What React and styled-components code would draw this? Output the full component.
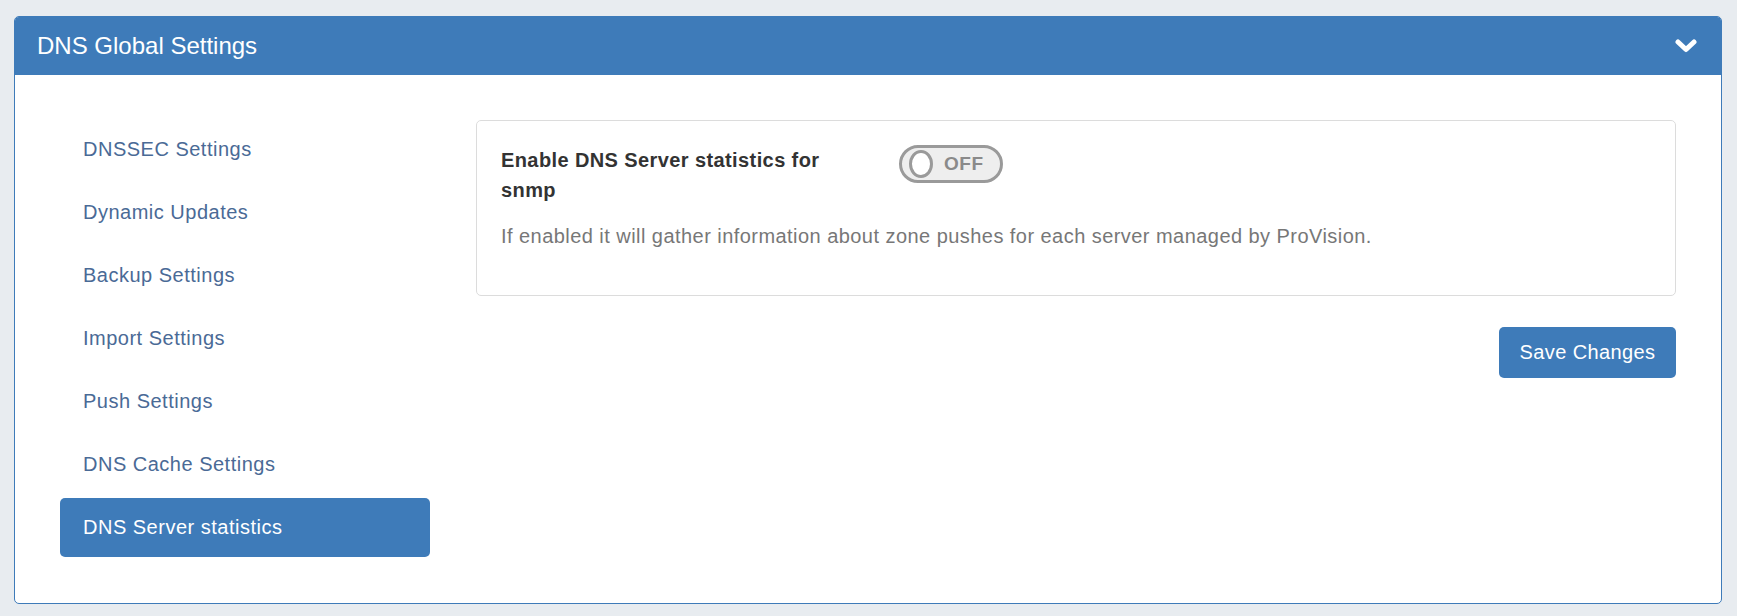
import React, { useState } from 'react'
import styled, { createGlobalStyle } from 'styled-components'

const GlobalStyle = createGlobalStyle`
  html, body {
    margin: 0;
    padding: 0;
    background: #e8ecf0;
    font-family: "Liberation Sans", Arial, sans-serif;
  }
  * { box-sizing: border-box; }
`

const sections = [
  'DNSSEC Settings',
  'Dynamic Updates',
  'Backup Settings',
  'Import Settings',
  'Push Settings',
  'DNS Cache Settings',
  'DNS Server statistics',
]

function App() {
  const [active, setActive] = useState(6)
  const [enabled, setEnabled] = useState(false)

  return (
    <>
      <GlobalStyle />
      <Page>
        <Panel>
          <PanelHeader>
            <h2>DNS Global Settings</h2>
            <svg width="22" height="14" viewBox="0 0 22 14">
              <polyline points="3,3 11,10.5 19,3" fill="none" stroke="#fff" strokeWidth="5" strokeLinecap="round" strokeLinejoin="round" />
            </svg>
          </PanelHeader>
          <PanelBody>
            <SideNav>
              {sections.map((s, i) => (
                <NavItem key={s} $active={i === active} onClick={() => setActive(i)}>{s}</NavItem>
              ))}
            </SideNav>
            <Content>
              <Card>
                <SettingRow>
                  <SettingLabel>Enable DNS Server statistics for snmp</SettingLabel>
                  <Toggle $on={enabled} onClick={() => setEnabled(!enabled)}>
                    <Knob />
                    <span>{enabled ? 'ON' : 'OFF'}</span>
                  </Toggle>
                </SettingRow>
                <Help>If enabled it will gather information about zone pushes for each server managed by ProVision.</Help>
              </Card>
              <Actions>
                <SaveButton>Save Changes</SaveButton>
              </Actions>
            </Content>
          </PanelBody>
        </Panel>
      </Page>
    </>
  )
}

export default App

const Page = styled.div`
  padding: 16px 15px 13px 14px;
`

const Panel = styled.section`
  border: 1px solid #3e7bb9;
  border-radius: 5px;
  background: #fff;
  overflow: hidden;
`

const PanelHeader = styled.header`
  height: 58px;
  background: #3e7bb9;
  display: flex;
  align-items: center;
  justify-content: space-between;
  padding: 0 24px 0 22px;

  h2 {
    margin: 0;
    color: #fff;
    font-size: 24px;
    font-weight: 400;
  }
`

const PanelBody = styled.div`
  display: grid;
  grid-template-columns: 370px 1fr;
  gap: 46px;
  padding: 45px 45px 46px 45px;
`

const SideNav = styled.nav`
  display: flex;
  flex-direction: column;
  gap: 4px;
`

const NavItem = styled.a`
  display: block;
  height: 59px;
  line-height: 59px;
  padding: 0 23px;
  border-radius: 5px;
  font-size: 20px;
  letter-spacing: 0.5px;
  cursor: pointer;
  color: ${p => (p.$active ? '#fff' : '#4a6a96')};
  background: ${p => (p.$active ? '#3e7bb9' : 'transparent')};
`

const Content = styled.div`
  display: flex;
  flex-direction: column;
`

const Card = styled.div`
  border: 1px solid #dcdcdc;
  border-radius: 5px;
  padding: 24px 24px 42px 24px;
  height: 176px;
`

const SettingRow = styled.div`
  display: grid;
  grid-template-columns: 398px auto;
  align-items: start;
`

const SettingLabel = styled.div`
  width: 340px;
  font-size: 20px;
  font-weight: 700;
  line-height: 30px;
  letter-spacing: 0.4px;
  color: #333;
`

const Toggle = styled.button`
  position: relative;
  width: 104px;
  height: 38px;
  border: 3px solid #9a9a9a;
  border-radius: 19px;
  background: #eee;
  padding: 0 0 0 42px;
  display: flex;
  align-items: center;
  cursor: pointer;
  font-family: inherit;

  span {
    font-size: 19px;
    font-weight: 700;
    color: #8a8a8a;
    letter-spacing: 0.5px;
  }
`

const Knob = styled.i`
  position: absolute;
  left: 7px;
  top: 2px;
  width: 24px;
  height: 28px;
  border: 3px solid #9a9a9a;
  border-radius: 50%;
  background: #fff;
`

const Help = styled.p`
  margin: 16px 0 0;
  font-size: 20px;
  line-height: 30px;
  letter-spacing: 0.45px;
  color: #777;
`

const Actions = styled.div`
  display: flex;
  justify-content: flex-end;
  margin-top: 31px;
`

const SaveButton = styled.button`
  width: 177px;
  height: 51px;
  border: none;
  border-radius: 5px;
  background: #3e7bb9;
  color: #fff;
  font-family: inherit;
  font-size: 20px;
  letter-spacing: 0.4px;
  cursor: pointer;
`
